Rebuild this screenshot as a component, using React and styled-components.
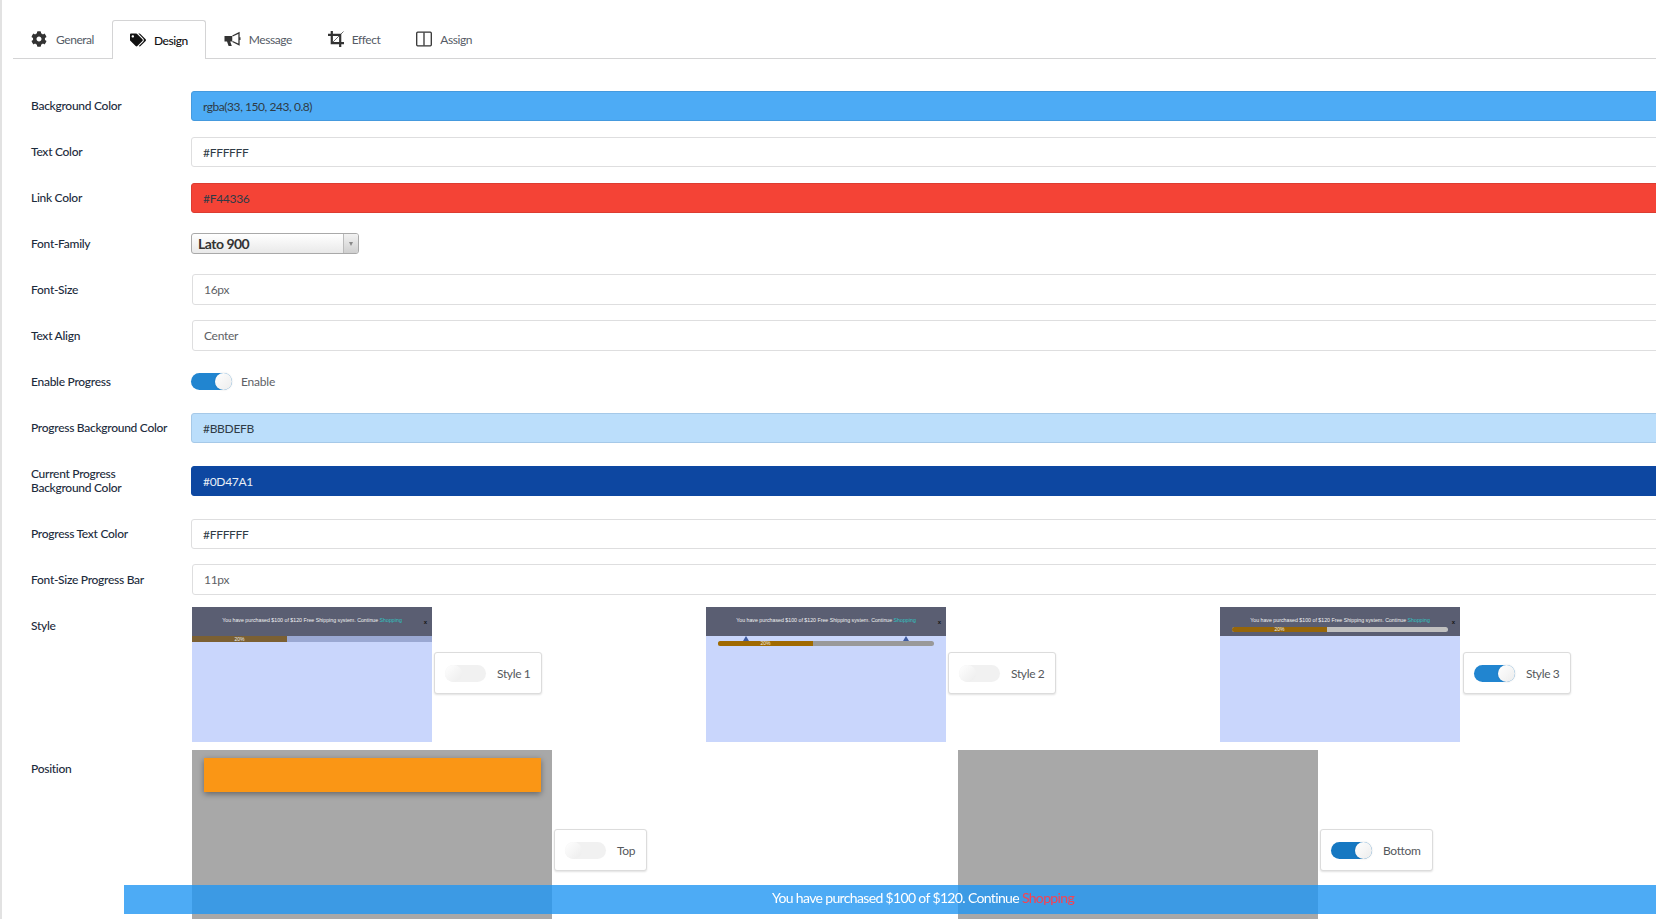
import styled, { createGlobalStyle } from 'styled-components';
import { FaCog, FaTags } from 'react-icons/fa';

const GlobalStyle = createGlobalStyle`
  html, body {
    margin: 0;
    height: 100%;
    overflow: hidden;
    background: #fff;
  }
  * { box-sizing: border-box; }
`;

const BullhornIcon = () => (
  <svg width="17" height="16" viewBox="0 0 17 16">
    <path d="M0.5 5H8.5V10.5H6.2L7.8 15H4.6L3 10.5H0.5Z" fill="#333" />
    <path d="M8.5 5L15 1.8V13.6L8.5 10.5" fill="#fff" stroke="#333" strokeWidth="1.3" />
    <path d="M15.8 6.2V9" stroke="#333" strokeWidth="1.4" />
  </svg>
);

const CropIcon = () => (
  <svg width="16" height="16" viewBox="0 0 16 16" fill="none" stroke="#333">
    <path d="M3.8 0V12.2H16" strokeWidth="2.2" />
    <path d="M0 3.8H12.2V16" strokeWidth="2.2" />
    <path d="M15.5 0.5L5 11" strokeWidth="0.7" />
  </svg>
);

const ColumnsIcon = () => (
  <svg width="16" height="16" viewBox="0 0 16 16" fill="none" stroke="#333" strokeWidth="1.3">
    <rect x="0.7" y="1.2" width="14.6" height="13.6" rx="1" />
    <path d="M8 1.5v13" />
  </svg>
);

const tabs = [
  { id: 'general', label: 'General', icon: <FaCog size={16} />, iconWidth: 17 },
  { id: 'design', label: 'Design', icon: <FaTags size={18} />, iconWidth: 16, active: true },
  { id: 'message', label: 'Message', icon: <BullhornIcon />, iconWidth: 17 },
  { id: 'effect', label: 'Effect', icon: <CropIcon />, iconWidth: 16 },
  { id: 'assign', label: 'Assign', icon: <ColumnsIcon />, iconWidth: 16 },
];

const Page = styled.div`
  width: 1666px;
  height: 919px;
  border-left: 2px solid #e2e2e2;
  font-family: Lato, 'Open Sans', sans-serif;
  overflow: hidden;
`;

const TabBar = styled.div`
  display: flex;
  height: 39px;
  margin: 20px 0 32px 11px;
  border-bottom: 1px solid #d4d4d5;
`;

const Tab = styled.div`
  display: flex;
  align-items: center;
  gap: 8px;
  height: ${p => (p.$active ? '39px' : '38px')};
  padding: 0 ${p => (p.$active ? '17px' : '18px')};
  font-size: 12px;
  letter-spacing: -0.45px;
  color: ${p => (p.$active ? '#111' : '#555b66')};
  font-weight: ${p => (p.$active ? 500 : 400)};
  background: #fff;
  ${p => p.$active && `
    border: 1px solid #d4d4d5;
    border-bottom: none;
    border-radius: 3px 3px 0 0;
  `}
`;

const TabIcon = styled.span`
  display: flex;
  justify-content: flex-start;
  width: ${p => p.$w}px;
  color: ${p => (p.$active ? '#111' : '#333')};
`;

const Form = styled.div`
  padding-left: 29px;
`;

const Row = styled.div`
  display: grid;
  grid-template-columns: 160px 1fr;
  align-items: ${p => (p.$top ? 'start' : 'center')};
  margin-bottom: ${p => p.$mb ?? 16}px;
`;

const Label = styled.label`
  font-size: 12px;
  line-height: 14px;
  font-weight: 500;
  letter-spacing: -0.28px;
  color: #1c2b3c;
  padding-top: ${p => p.$top || 0}px;
`;

const ColorInput = styled.div`
  display: flex;
  align-items: center;
  height: 30px;
  padding-left: 11px;
  font-size: 12px;
  letter-spacing: ${p => p.$ls ?? -0.3}px;
  border-radius: 3px;
  background: ${p => p.$bg || '#fff'};
  color: ${p => p.$fg || '#2f3b46'};
  border: 1px solid ${p => p.$line || '#dededf'};
`;

const PlainInput = styled.div`
  display: flex;
  align-items: center;
  height: 31px;
  margin-left: 1px;
  padding-left: 11px;
  font-size: 12px;
  letter-spacing: -0.3px;
  border-radius: 3px;
  background: #fff;
  color: #5e6166;
  border: 1px solid #dededf;
`;

const Select = styled.div`
  display: flex;
  align-items: stretch;
  width: 168px;
  height: 21px;
  margin: 4px 0;
  border: 1px solid #a9a9a9;
  border-radius: 3px;
  overflow: hidden;
  background: linear-gradient(#fff, #e9e9e9);
`;

const SelectValue = styled.span`
  flex: 1;
  padding-left: 6px;
  font-size: 14px;
  line-height: 20px;
  font-weight: 700;
  letter-spacing: -0.5px;
  color: #333;
`;

const SelectArrow = styled.span`
  display: flex;
  align-items: center;
  justify-content: center;
  width: 15px;
  border-left: 1px solid #bbb;
  background: linear-gradient(#f2f2f2, #cfcfcf);
  &::after {
    content: '';
    border-left: 2.5px solid transparent;
    border-right: 2.5px solid transparent;
    border-top: 4px solid #888;
  }
`;

const ToggleRow = styled.div`
  display: flex;
  align-items: center;
  gap: 9px;
  height: 31px;
  font-size: 12px;
  letter-spacing: -0.2px;
  color: #5e6166;
`;

const ToggleTrack = styled.span`
  position: relative;
  display: block;
  flex: none;
  width: 41px;
  height: 17px;
  border-radius: 9px;
  background: ${p => (p.$on ? p.$color || '#2185d0' : '#f1f1f1')};
  &::after {
    content: '';
    position: absolute;
    top: 0;
    left: ${p => (p.$on ? '24px' : '0')};
    width: 17px;
    height: 17px;
    border-radius: 50%;
    background: linear-gradient(135deg, #fff, #ececec);
    box-shadow: ${p => (p.$on ? '0 0 2px rgba(0, 0, 0, 0.15)' : 'none')};
  }
`;

const OptionGrid = styled.div`
  display: grid;
  grid-template-columns: repeat(${p => p.$cols}, ${p => p.$step}px);
  margin-left: 1px;
`;

const Option = styled.div`
  display: flex;
  align-items: center;
  gap: ${p => p.$gap ?? 2}px;
`;

const OptionCard = styled.div`
  display: flex;
  align-items: center;
  gap: 11px;
  height: 42px;
  margin-top: -3px;
  padding: 0 11px 0 10px;
  font-size: 12px;
  letter-spacing: -0.35px;
  color: #55585c;
  background: #fff;
  border: 1px solid #dcdcdc;
  border-radius: 3px;
  box-shadow: 0 1px 2px rgba(0, 0, 0, 0.12);
`;

const Thumb = styled.div`
  width: 240px;
  height: 135px;
  flex: none;
  background: #c9d6fc;
  overflow: hidden;
`;

const ThumbHead = styled.div`
  position: relative;
  height: 29px;
  padding-top: 9px;
  background: #5a5e72;
  color: #f1f1f1;
  font-family: 'Liberation Sans', sans-serif;
  font-size: 5.25px;
  line-height: 8px;
  text-align: center;
`;

const ThumbLink = styled.span`
  color: #2fc4c4;
`;

const ThumbClose = styled.span`
  position: absolute;
  top: 11px;
  right: 5px;
  font-size: 6px;
  font-weight: 700;
  color: #151515;
`;

const FlatBar = styled.div`
  height: 6px;
  background: #9aa8d2;
`;

const RoundBar = styled.div`
  height: 5px;
  margin: ${p => p.$margin};
  border-radius: 3px;
  overflow: hidden;
  background: ${p => p.$track};
`;

const BarFill = styled.div`
  width: ${p => p.$w}px;
  height: 100%;
  background: ${p => p.$color};
  color: #eee;
  font-family: 'Liberation Sans', sans-serif;
  font-size: 5px;
  line-height: ${p => p.$lh}px;
  text-align: center;
`;

const Markers = styled.div`
  display: flex;
  justify-content: space-between;
  height: 0;
  padding: 0 37px;
`;

const Marker = styled.span`
  border-left: 3px solid transparent;
  border-right: 3px solid transparent;
  border-bottom: 5px solid #3f5ba0;
  height: 5px;
`;

const PositionThumb = styled.div`
  display: flex;
  flex-direction: column;
  justify-content: ${p => (p.$bottom ? 'flex-end' : 'flex-start')};
  flex: none;
  width: 360px;
  height: 200px;
  padding: ${p => (p.$bottom ? '0 11px 0 12px' : '8px 11px 0 12px')};
  background: #a8a8a8;
`;

const PositionBar = styled.div`
  height: 34px;
  flex: none;
  margin-bottom: ${p => (p.$bottom ? '-6px' : '0')};
  background: #fa9615;
  box-shadow: 0 2px 6px rgba(0, 0, 0, 0.4);
`;

const PositionCard = styled(OptionCard)`
  margin-top: 0;
`;

const Notice = styled.div`
  position: fixed;
  left: 124px;
  top: 885px;
  width: 1598px;
  height: 29px;
  font-family: Lato, sans-serif;
  font-size: 14px;
  letter-spacing: -0.65px;
  line-height: 26px;
  text-align: center;
  color: #fff;
  background: rgba(33, 150, 243, 0.8);
`;

const NoticeLink = styled.span`
  color: #fb4150;
`;

const ThumbText = () => (
  <>
    You have purchased $100 of $120 Free Shipping system. Continue <ThumbLink>Shopping</ThumbLink>
    <ThumbClose>x</ThumbClose>
  </>
);

const fields = [
  { label: 'Background Color', value: 'rgba(33, 150, 243, 0.8)', bg: '#4dabf5', line: '#459ade', ls: -0.45 },
  { label: 'Text Color', value: '#FFFFFF' },
  { label: 'Link Color', value: '#F44336', bg: '#f44336', line: '#dc3c31' },
];

export default function App() {
  return (
    <Page>
      <GlobalStyle />
      <TabBar>
        {tabs.map(t => (
          <Tab key={t.id} $active={t.active}>
            <TabIcon $w={t.iconWidth} $active={t.active}>{t.icon}</TabIcon>
            {t.label}
          </Tab>
        ))}
      </TabBar>

      <Form>
        {fields.map(f => (
          <Row key={f.label}>
            <Label>{f.label}</Label>
            <ColorInput $bg={f.bg} $line={f.line} $ls={f.ls}>{f.value}</ColorInput>
          </Row>
        ))}

        <Row>
          <Label>Font-Family</Label>
          <Select>
            <SelectValue>Lato 900</SelectValue>
            <SelectArrow />
          </Select>
        </Row>

        <Row $mb={15}>
          <Label>Font-Size</Label>
          <PlainInput>16px</PlainInput>
        </Row>
        <Row $mb={15}>
          <Label>Text Align</Label>
          <PlainInput>Center</PlainInput>
        </Row>

        <Row>
          <Label>Enable Progress</Label>
          <ToggleRow>
            <ToggleTrack $on />
            Enable
          </ToggleRow>
        </Row>

        <Row $mb={23}>
          <Label>Progress Background Color</Label>
          <ColorInput $bg="#bbdefb" $line="#a6c9e8">#BBDEFB</ColorInput>
        </Row>
        <Row $mb={23}>
          <Label>Current Progress<br />Background Color</Label>
          <ColorInput $bg="#0d47a1" $fg="#e8eef6" $line="#0d47a1">#0D47A1</ColorInput>
        </Row>
        <Row $mb={15}>
          <Label>Progress Text Color</Label>
          <ColorInput>#FFFFFF</ColorInput>
        </Row>
        <Row $mb={12}>
          <Label>Font-Size Progress Bar</Label>
          <PlainInput>11px</PlainInput>
        </Row>

        <Row $top $mb={8}>
          <Label $top={12}>Style</Label>
          <OptionGrid $cols={3} $step={514}>
            <Option>
              <Thumb>
                <ThumbHead><ThumbText /></ThumbHead>
                <FlatBar>
                  <BarFill $w={95} $color="#7b6033" $lh={6}>20%</BarFill>
                </FlatBar>
              </Thumb>
              <OptionCard><ToggleTrack />Style 1</OptionCard>
            </Option>
            <Option>
              <Thumb>
                <ThumbHead><ThumbText /></ThumbHead>
                <Markers><Marker /><Marker /></Markers>
                <RoundBar $margin="5px 12px 0" $track="#999">
                  <BarFill $w={95} $color="#a06a00" $lh={5}>20%</BarFill>
                </RoundBar>
              </Thumb>
              <OptionCard><ToggleTrack />Style 2</OptionCard>
            </Option>
            <Option $gap={3}>
              <Thumb>
                <ThumbHead>
                  <ThumbText />
                  <RoundBar $margin="3px 12px 0" $track="#c0c0c0">
                    <BarFill $w={95} $color="#96660a" $lh={5}>20%</BarFill>
                  </RoundBar>
                </ThumbHead>
              </Thumb>
              <OptionCard><ToggleTrack $on />Style 3</OptionCard>
            </Option>
          </OptionGrid>
        </Row>

        <Row $top>
          <Label $top={12}>Position</Label>
          <OptionGrid $cols={2} $step={766}>
            <Option>
              <PositionThumb><PositionBar /></PositionThumb>
              <PositionCard><ToggleTrack />Top</PositionCard>
            </Option>
            <Option>
              <PositionThumb $bottom><PositionBar $bottom /></PositionThumb>
              <PositionCard><ToggleTrack $on $color="#1678c2" />Bottom</PositionCard>
            </Option>
          </OptionGrid>
        </Row>
      </Form>

      <Notice>
        You have purchased $100 of $120. Continue <NoticeLink>Shopping</NoticeLink>
      </Notice>
    </Page>
  );
}
